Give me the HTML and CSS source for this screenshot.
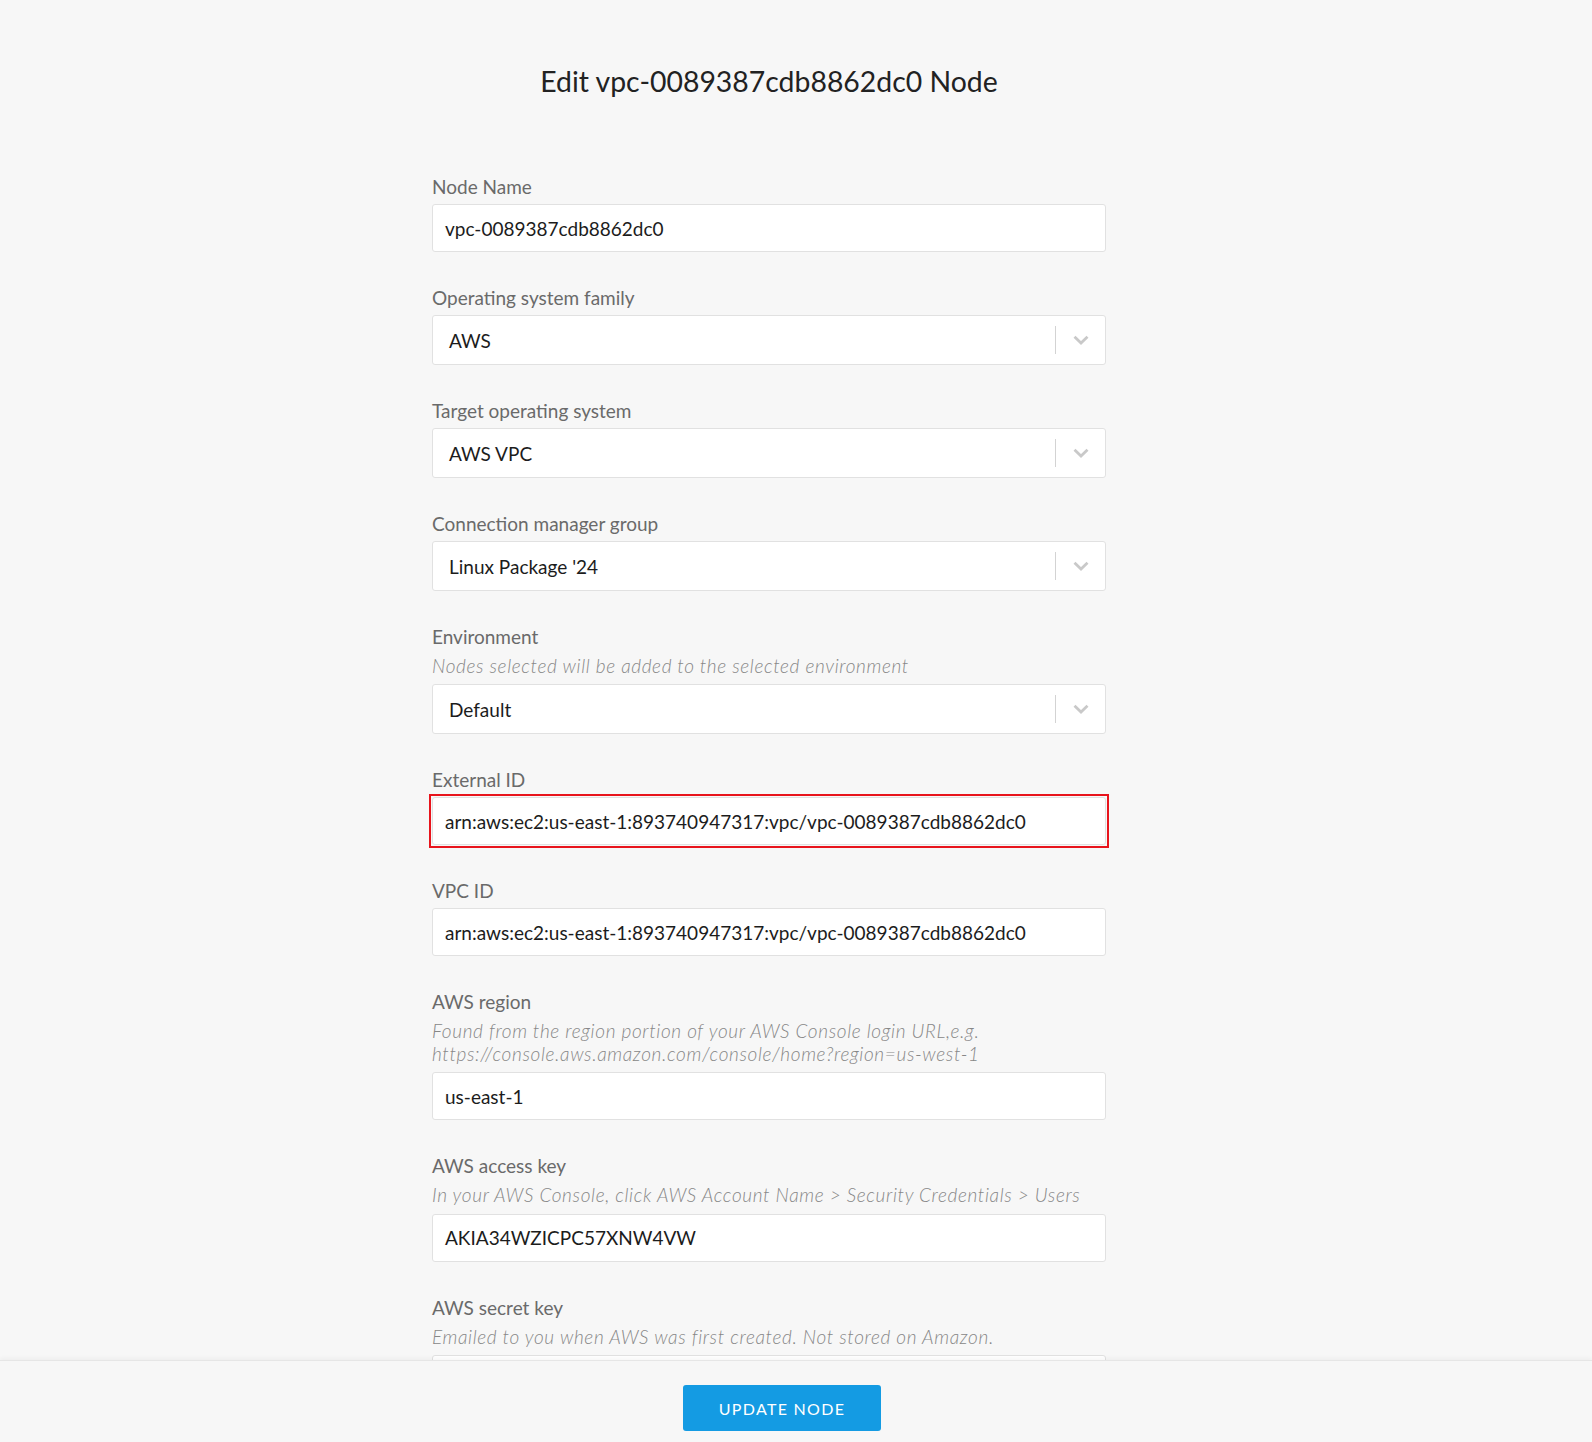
FILE: index.html
```html
<!DOCTYPE html>
<html lang="en">
<head>
<meta charset="utf-8">
<title>Edit Node</title>
<link rel="stylesheet" href="styles.css">
</head>
<body>
<div class="page">
  <main class="form">
    <h1 class="title">Edit vpc-0089387cdb8862dc0 Node</h1>

    <div class="field">
      <label class="label">Node Name</label>
      <div class="input">vpc-0089387cdb8862dc0</div>
    </div>

    <div class="field">
      <label class="label">Operating system family</label>
      <div class="select"><span class="select-value">AWS</span><span class="indicator"><svg width="16" height="10" viewBox="0 0 16 10"><polyline points="1.5,1.8 8,8 14.5,1.8" fill="none" stroke="#c9c9c9" stroke-width="2.8"/></svg></span></div>
    </div>

    <div class="field">
      <label class="label">Target operating system</label>
      <div class="select"><span class="select-value">AWS VPC</span><span class="indicator"><svg width="16" height="10" viewBox="0 0 16 10"><polyline points="1.5,1.8 8,8 14.5,1.8" fill="none" stroke="#c9c9c9" stroke-width="2.8"/></svg></span></div>
    </div>

    <div class="field">
      <label class="label">Connection manager group</label>
      <div class="select"><span class="select-value">Linux Package '24</span><span class="indicator"><svg width="16" height="10" viewBox="0 0 16 10"><polyline points="1.5,1.8 8,8 14.5,1.8" fill="none" stroke="#c9c9c9" stroke-width="2.8"/></svg></span></div>
    </div>

    <div class="field">
      <label class="label">Environment</label>
      <p class="hint">Nodes selected will be added to the selected environment</p>
      <div class="select"><span class="select-value">Default</span><span class="indicator"><svg width="16" height="10" viewBox="0 0 16 10"><polyline points="1.5,1.8 8,8 14.5,1.8" fill="none" stroke="#c9c9c9" stroke-width="2.8"/></svg></span></div>
    </div>

    <div class="field">
      <label class="label">External ID</label>
      <div class="highlight">
        <div class="input">arn:aws:ec2:us-east-1:893740947317:vpc/vpc-0089387cdb8862dc0</div>
      </div>
    </div>

    <div class="field">
      <label class="label">VPC ID</label>
      <div class="input">arn:aws:ec2:us-east-1:893740947317:vpc/vpc-0089387cdb8862dc0</div>
    </div>

    <div class="field">
      <label class="label">AWS region</label>
      <p class="hint">Found from the region portion of your AWS Console login URL,e.g.<br>https://console.aws.amazon.com/console/home?region=us-west-1</p>
      <div class="input">us-east-1</div>
    </div>

    <div class="field">
      <label class="label">AWS access key</label>
      <p class="hint">In your AWS Console, click AWS Account Name &gt; Security Credentials &gt; Users</p>
      <div class="input">AKIA34WZICPC57XNW4VW</div>
    </div>

    <div class="field">
      <label class="label">AWS secret key</label>
      <p class="hint">Emailed to you when AWS was first created. Not stored on Amazon.</p>
      <div class="input"></div>
    </div>
  </main>
</div>

<footer class="footer">
  <button class="btn-primary" type="button">UPDATE NODE</button>
</footer>
</body>
</html>
```

FILE: styles.css
```css
* { box-sizing: border-box; }

html, body {
  margin: 0;
  padding: 0;
  background: #f7f7f7;
}

body {
  font-family: Lato, "Open Sans", "Liberation Sans", sans-serif;
  color: #222222;
}

.page {
  display: flex;
  justify-content: center;
  padding-right: 54px;
  padding-bottom: 140px;
}

.form {
  width: 674px;
  display: flex;
  flex-direction: column;
}

.title {
  margin: 62px 0 76px;
  font-size: 28.4px;
  line-height: 38px;
  font-weight: 400;
  text-align: center;
  color: #222222;
}

.field {
  display: flex;
  flex-direction: column;
  margin-bottom: 35px;
}

.label {
  font-size: 19px;
  line-height: 22px;
  color: #6a6a6a;
  margin-bottom: 6px;
}

.hint {
  margin: 1px 0 7px;
  font-size: 19px;
  line-height: 22.4px;
  font-style: italic;
  font-weight: 300;
  color: #878787;
  letter-spacing: 0.63px;
}

.input {
  height: 48px;
  background: #ffffff;
  border: 1px solid #e1e1e1;
  border-radius: 3px;
  padding: 0 12px;
  display: flex;
  align-items: center;
  font-size: 19px;
  color: #1c1c1c;
}

.highlight {
  border: 2px solid #e8141c;
  padding: 1px;
  margin: -3px -3px;
}

.select {
  height: 50px;
  background: #ffffff;
  border: 1px solid #e1e1e1;
  border-radius: 3px;
  display: flex;
  align-items: center;
}

.select-value {
  flex: 1;
  padding-left: 16px;
  font-size: 19px;
  color: #1c1c1c;
}

.indicator {
  width: 50px;
  height: 28px;
  border-left: 1px solid #d3d3d3;
  display: flex;
  align-items: center;
  justify-content: center;
}

.indicator svg { display: block; }

.footer {
  position: fixed;
  left: 0;
  right: 0;
  bottom: 0;
  height: 82px;
  background: #f7f7f7;
  border-top: 1px solid #e6e6e6;
  box-shadow: 0 -2px 4px rgba(0, 0, 0, 0.04);
  display: flex;
  align-items: flex-start;
  justify-content: center;
  padding-right: 28px;
  padding-top: 24px;
}

.btn-primary {
  width: 198px;
  height: 46px;
  border: none;
  border-radius: 3px;
  background: #149be3;
  color: #ffffff;
  font-family: Lato, "Open Sans", sans-serif;
  font-size: 16px;
  font-weight: 400;
  letter-spacing: 1.3px;
  cursor: pointer;
}
```
